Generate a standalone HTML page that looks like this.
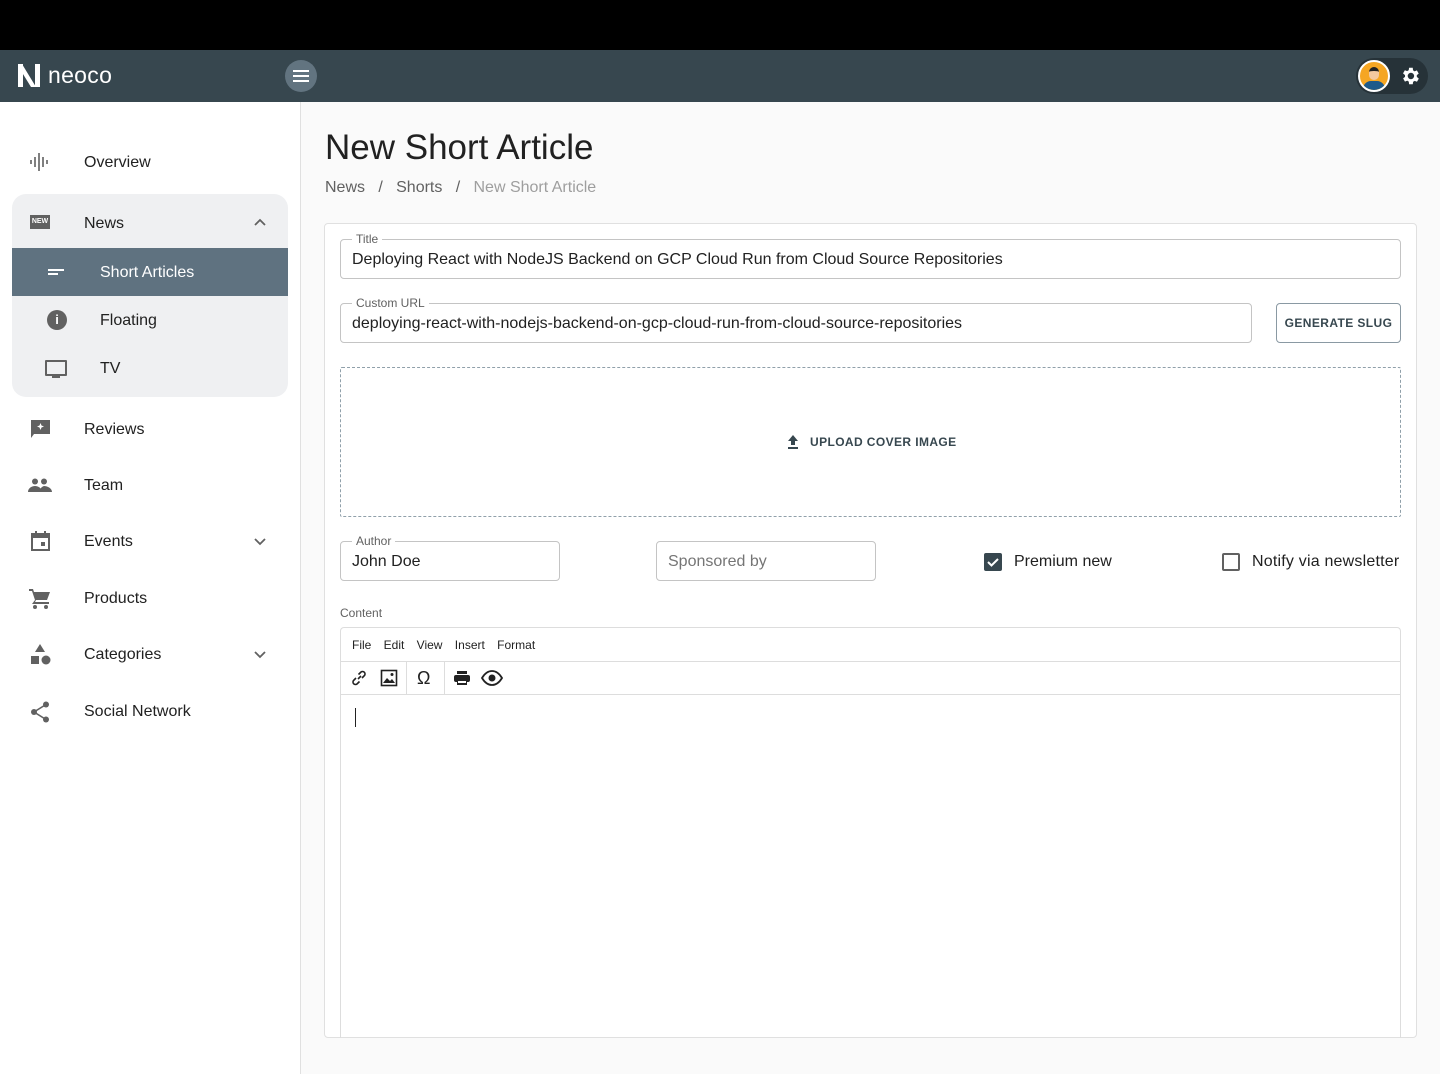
<!DOCTYPE html>
<html><head><meta charset="utf-8"><style>
*{box-sizing:border-box;margin:0;padding:0}
body{width:1440px;height:1074px;overflow:hidden;background:#fafafa;font-family:"Liberation Sans",Roboto,sans-serif;color:#212121;position:relative}
.a{position:absolute}
.top{left:0;top:0;width:1440px;height:50px;background:#000}
.hdr{left:0;top:50px;width:1440px;height:52px;background:#37474f}
.side{left:0;top:102px;width:301px;height:972px;background:#fff;border-right:1px solid #e0e0e0}
.item{position:absolute;left:0;width:300px;font-size:16px;color:#212121}
.item .t{position:absolute;left:84px;top:2px!important}
.ic{position:absolute;left:28px}
.fld{position:absolute;border:1px solid #c4c4c4;border-radius:4px;background:#fff;font-size:16px;color:#212121;padding-left:11px;line-height:40px;height:40px}
.lbl{position:absolute;top:-8px;left:11px;font-size:12px;color:#616161;background:#fff;padding:0 4px;line-height:15px}
</style></head><body>
<div class="a top"></div>
<div class="a hdr">
 <svg class="a" style="left:17px;top:13px" width="24" height="25" viewBox="0 0 24 25"><path d="M1 1h5v23H1zM18 1h5v23h-5zM5 1l14 23h-5L1 3z" fill="#fff"/></svg>
 <div class="a" style="left:48px;top:12px;font-size:23px;color:#fff;letter-spacing:0.3px">neoco</div>
 <div class="a" style="left:285px;top:10px;width:32px;height:32px;border-radius:50%;background:#627480"></div>
 <svg class="a" style="left:292px;top:17px" width="18" height="18" viewBox="0 0 18 18"><path d="M1 4h16M1 9h16M1 14h16" stroke="#fff" stroke-width="2"/></svg>
 <div class="a" style="left:1356px;top:8px;width:72px;height:36px;border-radius:18px;background:#263238"></div>
 <div class="a" style="left:1358px;top:10px;width:32px;height:32px;border-radius:50%;background:#f5a623;border:2px solid #fff;overflow:hidden">
  <div class="a" style="left:9px;top:5px;width:10px;height:13px;border-radius:5px;background:#f3c9a0;border-top:4px solid #222"></div>
  <div class="a" style="left:3px;top:19px;width:22px;height:12px;border-radius:8px 8px 0 0;background:#1e5a8a"></div>
 </div>
 <svg class="a" style="left:1399px;top:15px" width="22" height="22" viewBox="0 0 24 24"><path fill="#fff" d="M19.4 13a7.8 7.8 0 0 0 0-2l2.1-1.6-2-3.5-2.5 1a7.3 7.3 0 0 0-1.7-1L15 3h-4l-.4 2.7a7.3 7.3 0 0 0-1.7 1l-2.5-1-2 3.5L6.6 11a7.8 7.8 0 0 0 0 2l-2.1 1.6 2 3.5 2.5-1a7.3 7.3 0 0 0 1.7 1L11 21h4l.4-2.7a7.3 7.3 0 0 0 1.7-1l2.5 1 2-3.5zM13 15.5A3.5 3.5 0 1 1 13 8.5a3.5 3.5 0 0 1 0 7z"/></svg>
</div>

<div class="a side">
 <div class="item" style="top:50px"><svg class="ic" width="22" height="20" viewBox="0 0 22 20"><path d="M3 8v4M7 5v10M11 1v18M15 5v10M19 8v4" stroke="#616161" stroke-width="1.6"/></svg><span class="t">Overview</span></div>
 <div class="a" style="left:12px;top:92px;width:276px;height:203px;background:#eff0f2;border-radius:14px;overflow:hidden">
  <div class="a" style="left:18px;top:21px;width:20px;height:14px;background:#616161;color:#fff;font-size:7px;font-weight:bold;line-height:14px;text-align:center">NEW</div>
  <div class="a" style="left:72px;top:21px;font-size:16px">News</div>
  <svg class="a" style="left:241px;top:23px" width="14" height="10" viewBox="0 0 14 10"><path d="M2 8l5-5 5 5" stroke="#616161" stroke-width="1.8" fill="none"/></svg>
  <div class="a" style="left:0;top:54px;width:276px;height:48px;background:#5f7280"></div>
  <div class="a" style="left:36px;top:75px;width:16px;height:2px;background:#fff"></div>
  <div class="a" style="left:36px;top:79px;width:10px;height:2px;background:#fff"></div>
  <div class="a" style="left:88px;top:70px;font-size:16px;color:#fff">Short Articles</div>
  <div class="a" style="left:35px;top:116px;width:20px;height:20px;border-radius:50%;background:#616161;color:#fff;font-size:13px;font-weight:bold;text-align:center;line-height:20px">i</div>
  <div class="a" style="left:88px;top:118px;font-size:16px">Floating</div>
  <div class="a" style="left:33px;top:166px;width:22px;height:16px;border:2px solid #616161;border-radius:1px"></div>
  <div class="a" style="left:40px;top:182px;width:8px;height:2px;background:#616161"></div>
  <div class="a" style="left:88px;top:166px;font-size:16px">TV</div>
 </div>
 <div class="item" style="top:317px"><svg class="ic" style="left:30px;top:1px" width="21" height="20" viewBox="0 0 21 20"><path d="M1 0h19v14H4l-3 4z" fill="#616161"/><path d="M10.5 3l1 2.5 2.5 1-2.5 1-1 2.5-1-2.5-2.5-1 2.5-1z" fill="#fff"/></svg><span class="t">Reviews</span></div>
 <div class="item" style="top:373px"><svg class="ic" style="left:28px;top:3px" width="24" height="14" viewBox="0 0 24 14"><circle cx="7" cy="3.5" r="3" fill="#616161"/><circle cx="16" cy="3.5" r="3" fill="#616161"/><path d="M0 14c0-4 4-6 7-6s7 2 7 6zM12 14c0-3 1-5 4-6 3 0 8 2 8 6z" fill="#616161"/></svg><span class="t">Team</span></div>
 <div class="item" style="top:429px"><svg class="ic" style="left:31px;top:0" width="19" height="20" viewBox="0 0 19 20"><rect x="1" y="3" width="17" height="16" fill="none" stroke="#616161" stroke-width="2"/><rect x="1" y="3" width="17" height="4" fill="#616161"/><path d="M5 0v4M14 0v4" stroke="#616161" stroke-width="2"/><rect x="10" y="11" width="4" height="4" fill="#616161"/></svg><span class="t">Events</span><svg class="a" style="left:253px;top:6px" width="14" height="10" viewBox="0 0 14 10"><path d="M2 2l5 5 5-5" stroke="#616161" stroke-width="1.8" fill="none"/></svg></div>
 <div class="item" style="top:486px"><svg class="ic" style="left:29px;top:0" width="22" height="22" viewBox="0 0 22 22"><path d="M0 1h4l1 3h16l-3 8H7l-1 2h14v2H3l3-4L3 3H0z" fill="#616161"/><circle cx="6" cy="19" r="2" fill="#616161"/><circle cx="17" cy="19" r="2" fill="#616161"/></svg><span class="t">Products</span></div>
 <div class="item" style="top:542px"><svg class="ic" style="left:31px;top:0" width="20" height="22" viewBox="0 0 20 22"><path d="M9 0l5 8H4z" fill="#616161"/><rect x="0" y="12" width="8" height="8" fill="#616161"/><circle cx="15" cy="16" r="4.5" fill="#616161"/></svg><span class="t">Categories</span><svg class="a" style="left:253px;top:6px" width="14" height="10" viewBox="0 0 14 10"><path d="M2 2l5 5 5-5" stroke="#616161" stroke-width="1.8" fill="none"/></svg></div>
 <div class="item" style="top:599px"><svg class="ic" style="left:30px;top:0" width="20" height="22" viewBox="0 0 20 22"><circle cx="16" cy="3.5" r="3" fill="#616161"/><circle cx="4" cy="11" r="3" fill="#616161"/><circle cx="16" cy="18.5" r="3" fill="#616161"/><path d="M16 3.5L4 11l12 7.5" stroke="#616161" stroke-width="1.6" fill="none"/></svg><span class="t">Social Network</span></div>
</div>

<div class="a" style="left:325px;top:128px;font-size:35px;color:#212121">New Short Article</div>
<div class="a" style="left:325px;top:179px;font-size:16px;color:#616161">News &nbsp;&nbsp;/&nbsp;&nbsp; Shorts &nbsp;&nbsp;/&nbsp;&nbsp; <span style="color:#9e9e9e">New Short Article</span></div>

<div class="a" style="left:324px;top:223px;width:1093px;height:815px;background:#fff;border:1px solid #e0e0e0;border-radius:4px"></div>
<div class="fld" style="left:340px;top:239px;width:1061px">Deploying React with NodeJS Backend on GCP Cloud Run from Cloud Source Repositories<span class="lbl">Title</span></div>
<div class="fld" style="left:340px;top:303px;width:912px">deploying-react-with-nodejs-backend-on-gcp-cloud-run-from-cloud-source-repositories<span class="lbl">Custom URL</span></div>
<div class="a" style="left:1276px;top:303px;width:125px;height:40px;border:1px solid #8a99a3;border-radius:4px;font-size:12px;font-weight:bold;color:#37474f;text-align:center;line-height:38px;letter-spacing:0.4px">GENERATE SLUG</div>
<div class="a" style="left:340px;top:367px;width:1061px;height:150px;border:1px dashed #90a0aa;border-radius:2px"></div>
<svg class="a" style="left:787px;top:435px" width="12" height="14" viewBox="0 0 12 14"><path d="M6 0l5 6H8v4H4V6H1zM1 12h10v2H1z" fill="#37474f"/></svg>
<div class="a" style="left:810px;top:435px;font-size:12px;font-weight:bold;color:#37474f;letter-spacing:0.4px">UPLOAD COVER IMAGE</div>

<div class="fld" style="left:340px;top:541px;width:220px">John Doe<span class="lbl">Author</span></div>
<div class="fld" style="left:656px;top:541px;width:220px;color:#757575">Sponsored by</div>
<div class="a" style="left:984px;top:553px;width:18px;height:18px;border-radius:2px;background:#37474f"></div>
<svg class="a" style="left:986px;top:555px" width="14" height="14" viewBox="0 0 14 14"><path d="M2 7l3.5 3.5L12 4" stroke="#fff" stroke-width="2" fill="none"/></svg>
<div class="a" style="left:1014px;top:553px;font-size:16px">Premium new</div>
<div class="a" style="left:1222px;top:553px;width:18px;height:18px;border-radius:2px;border:2px solid #616161"></div>
<div class="a" style="left:1252px;top:553px;font-size:16px;letter-spacing:0.2px">Notify via newsletter</div>

<div class="a" style="left:340px;top:606px;font-size:12px;color:#616161">Content</div>
<div class="a" style="left:340px;top:627px;width:1061px;height:411px;border:1px solid #ddd;border-bottom:none;border-radius:4px 4px 0 0"></div>
<div class="a" style="left:352px;top:638px;font-size:12px;color:#222;word-spacing:9px">File Edit View Insert Format</div>
<div class="a" style="left:341px;top:661px;width:1059px;height:1px;background:#ddd"></div>
<div class="a" style="left:341px;top:694px;width:1059px;height:1px;background:#ddd"></div>
<div class="a" style="left:406px;top:662px;width:1px;height:32px;background:#ddd"></div>
<div class="a" style="left:444px;top:662px;width:1px;height:32px;background:#ddd"></div>
<svg class="a" style="left:350px;top:669px" width="18" height="18" viewBox="0 0 18 18"><path d="M8 10l3-3M6 9l-2.5 2.5a2.5 2.5 0 0 0 3.5 3.5L9.5 12.5M12 9l2.5-2.5a2.5 2.5 0 0 0-3.5-3.5L8.5 5.5" stroke="#222" stroke-width="1.6" fill="none"/></svg>
<svg class="a" style="left:380px;top:669px" width="18" height="18" viewBox="0 0 18 18"><rect x="1.5" y="1.5" width="15" height="15" stroke="#222" stroke-width="1.6" fill="none"/><path d="M3 14l4-5 3 3 2-2 3 4z" fill="#222"/><circle cx="12" cy="5.5" r="1.5" fill="#222"/></svg>
<div class="a" style="left:417px;top:668px;font-size:18px;color:#222">Ω</div>
<svg class="a" style="left:453px;top:670px" width="18" height="16" viewBox="0 0 18 16"><rect x="4" y="1" width="10" height="3" fill="#222"/><rect x="1" y="5" width="16" height="7" rx="2" fill="#222"/><rect x="4" y="10" width="10" height="5" fill="#222"/><rect x="5" y="11" width="8" height="2" fill="#fff"/></svg>
<svg class="a" style="left:481px;top:670px" width="22" height="16" viewBox="0 0 22 16"><path d="M1 8c3-5 6-7 10-7s7 2 10 7c-3 5-6 7-10 7S4 13 1 8z" stroke="#222" stroke-width="1.8" fill="none"/><circle cx="11" cy="8" r="3.5" fill="#222"/></svg>
<div class="a" style="left:355px;top:708px;width:1px;height:19px;background:#222"></div>
</body></html>
